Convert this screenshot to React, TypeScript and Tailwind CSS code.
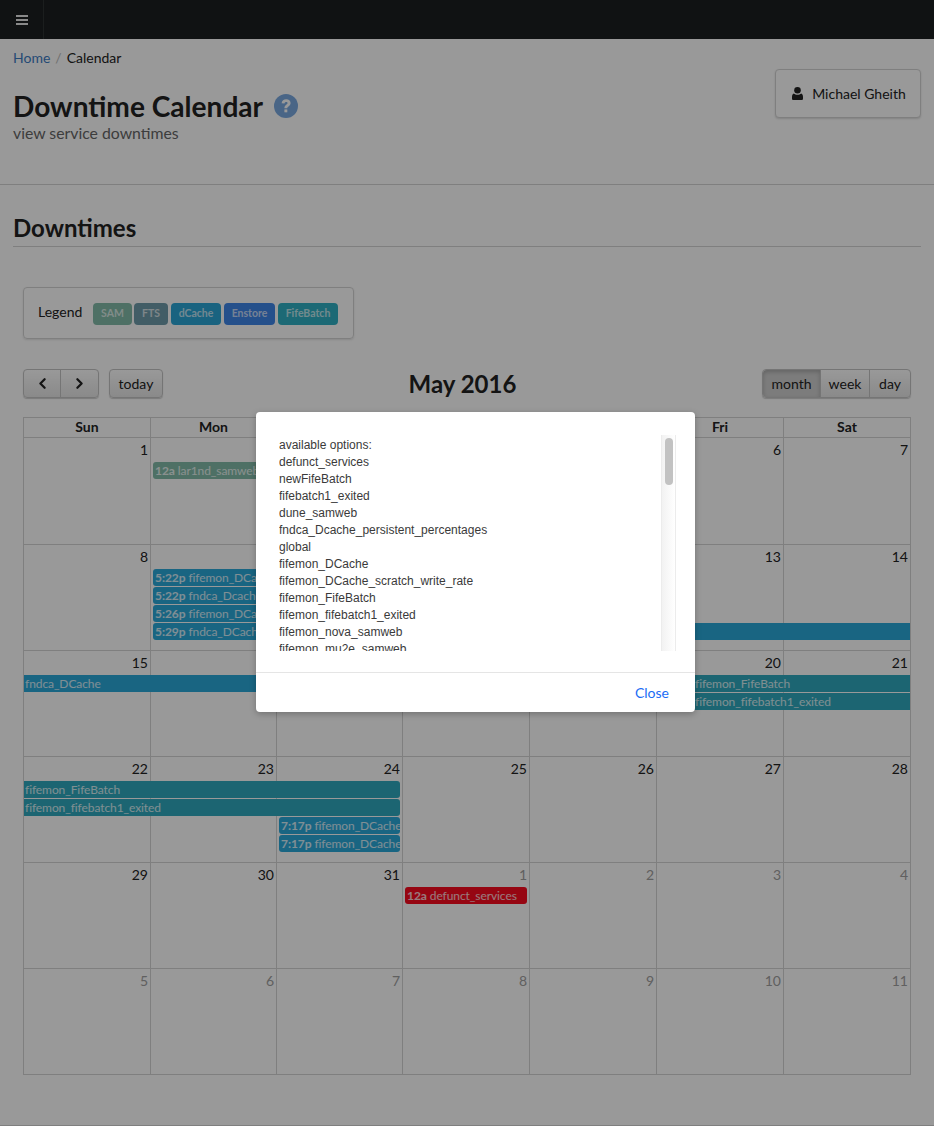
import { ChevronLeft, ChevronRight } from 'lucide-react'

const lato = { fontFamily: 'Lato, sans-serif' }

interface CalEvent {
  start: number
  span: number
  row: number
  time?: string
  title: string
  color: string
  left?: boolean
  right?: boolean
  inset?: string
}

const BLUE = 'bg-[#2ba8d9]'
const FIFE = 'bg-[#2fa9be]'

const weeks: { days: { n: number; muted?: boolean }[]; events: CalEvent[] }[] = [
  {
    days: [1, 2, 3, 4, 5, 6, 7].map((n) => ({ n })),
    events: [{ start: 2, span: 1, row: 2, time: '12a', title: 'lar1nd_samweb', color: 'bg-[#82bba9]', left: true, right: true }],
  },
  {
    days: [8, 9, 10, 11, 12, 13, 14].map((n) => ({ n })),
    events: [
      { start: 2, span: 1, row: 2, time: '5:22p', title: 'fifemon_DCache', color: BLUE, left: true, right: true },
      { start: 2, span: 1, row: 3, time: '5:22p', title: 'fndca_Dcache', color: BLUE, left: true, right: true },
      { start: 2, span: 1, row: 4, time: '5:26p', title: 'fifemon_DCache', color: BLUE, left: true, right: true },
      { start: 2, span: 1, row: 5, time: '5:29p', title: 'fndca_DCache', color: BLUE, left: true, right: true },
      { start: 5, span: 3, row: 5, title: '', color: BLUE, left: true },
    ],
  },
  {
    days: [15, 16, 17, 18, 19, 20, 21].map((n) => ({ n })),
    events: [
      { start: 1, span: 4, row: 2, title: 'fndca_DCache', color: BLUE, right: true },
      { start: 6, span: 2, row: 2, title: 'fifemon_FifeBatch', color: FIFE, inset: 'pl-[38px]' },
      { start: 6, span: 2, row: 3, title: 'fifemon_fifebatch1_exited', color: FIFE, inset: 'pl-[38px]' },
    ],
  },
  {
    days: [22, 23, 24, 25, 26, 27, 28].map((n) => ({ n })),
    events: [
      { start: 1, span: 3, row: 2, title: 'fifemon_FifeBatch', color: FIFE, right: true },
      { start: 1, span: 3, row: 3, title: 'fifemon_fifebatch1_exited', color: FIFE, right: true },
      { start: 3, span: 1, row: 4, time: '7:17p', title: 'fifemon_DCache', color: BLUE, left: true, right: true },
      { start: 3, span: 1, row: 5, time: '7:17p', title: 'fifemon_DCache', color: BLUE, left: true, right: true },
    ],
  },
  {
    days: [
      { n: 29 },
      { n: 30 },
      { n: 31 },
      { n: 1, muted: true },
      { n: 2, muted: true },
      { n: 3, muted: true },
      { n: 4, muted: true },
    ],
    events: [{ start: 4, span: 1, row: 2, time: '12a', title: 'defunct_services', color: 'bg-[#fb0a1e]', left: true, right: true }],
  },
  {
    days: [5, 6, 7, 8, 9, 10, 11].map((n) => ({ n, muted: true })),
    events: [],
  },
]

const colStart = ['col-start-1', 'col-start-2', 'col-start-3', 'col-start-4', 'col-start-5', 'col-start-6', 'col-start-7']
const colSpan = ['col-span-1', 'col-span-2', 'col-span-3', 'col-span-4']
const rowStart = ['row-start-1', 'row-start-2', 'row-start-3', 'row-start-4', 'row-start-5']

const options = [
  'available options:',
  'defunct_services',
  'newFifeBatch',
  'fifebatch1_exited',
  'dune_samweb',
  'fndca_Dcache_persistent_percentages',
  'global',
  'fifemon_DCache',
  'fifemon_DCache_scratch_write_rate',
  'fifemon_FifeBatch',
  'fifemon_fifebatch1_exited',
  'fifemon_nova_samweb',
  'fifemon_mu2e_samweb',
  'fifemon_uboone_samweb',
]

function Badge({ label, color, width }: { label: string; color: string; width: string }) {
  return (
    <span className={`${color} ${width} h-[22px] rounded-[4px] flex items-center justify-center text-[10.5px] font-bold text-white/70`}>
      {label}
    </span>
  )
}

export default function App() {
  return (
    <div className="relative h-[1126px] overflow-hidden bg-white text-[#222] flex flex-col" style={lato}>
      {/* Navbar */}
      <header className="h-[39px] bg-[#1c1f20] flex shrink-0">
        <div className="w-[44px] border-r border-[#2e3233] flex items-center justify-center">
          <svg width="12" height="10" viewBox="0 0 12 10" className="text-[#e4e4e4]" fill="currentColor">
            <rect width="12" height="2" y="0" />
            <rect width="12" height="2" y="4" />
            <rect width="12" height="2" y="8" />
          </svg>
        </div>
      </header>

      {/* Page header */}
      <div className="h-[146px] px-[13px] border-b border-[#d4d4d4] shrink-0 flex justify-between">
        <div>
          <div className="pt-[10px] text-[14px] leading-[18px] flex gap-[5px]">
            <span className="text-[#3d7cc4]">Home</span>
            <span className="text-[#bbb]">/</span>
            <span>Calendar</span>
          </div>
          <div className="mt-[21px] flex items-center gap-[11px]">
            <h1 className="text-[28.1px] leading-[36px] font-bold">Downtime Calendar</h1>
            <svg width="24" height="24" viewBox="0 0 24 24">
              <circle cx="12" cy="12" r="12" fill="#7ba9e0" />
              <path d="M7.6 9.2C7.9 6.7 9.7 5.2 12.2 5.2c2.6 0 4.4 1.6 4.4 3.8 0 1.6-.9 2.6-2.1 3.4-.9.6-1.2 1-1.2 1.9h-2.9c0-1.8.6-2.8 1.8-3.6.9-.6 1.4-1 1.4-1.6 0-.7-.6-1.2-1.4-1.2-.9 0-1.5.5-1.7 1.5z" fill="#fff" />
              <rect x="10.4" y="15.4" width="2.9" height="2.9" fill="#fff" />
            </svg>
          </div>
          <p className="text-[15.8px] leading-[20px] text-[#666] -mt-[1px]">view service downtimes</p>
        </div>
        <div className="mt-[30px] w-[146px] h-[49px] pl-[2px] border border-[#d4d4d4] rounded-[4px] bg-white shadow-[0_1px_2px_rgba(0,0,0,0.15)] flex items-center justify-center gap-[9px] text-[14px]">
          <svg width="11" height="13" viewBox="0 0 11 13" fill="currentColor">
            <circle cx="5.5" cy="3.3" r="3.3" />
            <path d="M1.8 6.4C0.6 6.9 0 8 0 10v1.4c0 .9.6 1.6 1.5 1.6h8c.9 0 1.5-.7 1.5-1.6V10c0-2-.6-3.1-1.8-3.6-1 .9-2.2 1.3-3.7 1.3s-2.7-.4-3.7-1.3z" />
          </svg>
          Michael Gheith
        </div>
      </div>

      <main className="px-[13px] flex-1">
        <h2 className="mt-[27px] pb-[3px] border-b border-[#d4d4d4] text-[24px] leading-[31px] font-bold">Downtimes</h2>

        <div className="mx-[10px]">
          {/* Legend */}
          <div className="mt-[40px] w-[331px] h-[52px] border border-[#d4d4d4] rounded-[4px] shadow-[0_1px_2px_rgba(0,0,0,0.12)] flex items-center pl-[14px]">
            <span className="text-[14px] w-[55px] -mt-[4px]">Legend</span>
            <div className="flex gap-[3px] mt-[1px]">
              <Badge label="SAM" color="bg-[#82bba9]" width="w-[39px] -mr-px" />
              <Badge label="FTS" color="bg-[#6f9cab]" width="w-[34px]" />
              <Badge label="dCache" color="bg-[#2ba6d6]" width="w-[50px]" />
              <Badge label="Enstore" color="bg-[#3f85e8]" width="w-[51px]" />
              <Badge label="FifeBatch" color="bg-[#30b0c4]" width="w-[60px]" />
            </div>
          </div>

          {/* Toolbar */}
          <div className="mt-[30px] h-[29px] flex items-center justify-between">
            <div className="flex gap-[10px]">
              <div className="flex h-[29px] rounded-[4px] border border-[#c4c4c4] bg-gradient-to-b from-white to-[#e6e6e6] shadow-[0_1px_1px_rgba(0,0,0,0.2)]">
                <span className="w-[37px] border-r border-[#c4c4c4] flex items-center justify-center">
                  <ChevronLeft size={17} strokeWidth={3.2} />
                </span>
                <span className="w-[37px] flex items-center justify-center">
                  <ChevronRight size={17} strokeWidth={3.2} />
                </span>
              </div>
              <span className="w-[54px] h-[29px] rounded-[4px] border border-[#c4c4c4] bg-gradient-to-b from-white to-[#e6e6e6] shadow-[0_1px_1px_rgba(0,0,0,0.2)] flex items-center justify-center text-[14px]">
                today
              </span>
            </div>
            <h2 className="text-[24px] leading-[29px] font-bold">May 2016</h2>
            <div className="flex h-[29px] rounded-[4px] border border-[#c4c4c4] bg-gradient-to-b from-white to-[#e6e6e6] shadow-[0_1px_1px_rgba(0,0,0,0.2)] text-[14px]">
              <span className="w-[57px] bg-[#cfcfcf] rounded-l-[4px] shadow-[inset_0_2px_4px_rgba(0,0,0,0.2)] flex items-center justify-center">month</span>
              <span className="w-[50px] border-x border-[#c4c4c4] flex items-center justify-center">week</span>
              <span className="w-[40px] flex items-center justify-center">day</span>
            </div>
          </div>

          {/* Calendar */}
          <div className="mt-[19px] border-l border-t border-[#d4d4d4] text-[14px]">
            <div className="grid grid-cols-[127px_126px_126px_127px_127px_127px_127px] h-[20px] border-b border-[#d4d4d4]">
              {['Sun', 'Mon', 'Tue', 'Wed', 'Thu', 'Fri', 'Sat'].map((d) => (
                <div key={d} className="border-r border-[#d4d4d4] text-center font-bold leading-[18px]">{d}</div>
              ))}
            </div>
            {weeks.map((week, i) => (
              <div
                key={i}
                className={`grid grid-cols-[127px_126px_126px_127px_127px_127px_127px] grid-rows-[24px_18px_18px_18px_1fr] border-b border-[#d4d4d4] ${i === 0 ? 'h-[107px]' : 'h-[106px]'}`}
              >
                {week.days.map((d, j) => (
                  <div
                    key={j}
                    className={`${colStart[j]} row-start-1 row-span-5 border-r border-[#d4d4d4] text-right pr-[2px] leading-[23px] ${d.muted ? 'text-[#a0a0a0]' : ''}`}
                  >
                    {d.n}
                  </div>
                ))}
                {week.events.map((ev, k) => (
                  <div
                    key={k}
                    className={`${colStart[ev.start - 1]} ${colSpan[ev.span - 1]} ${rowStart[ev.row - 1]} z-10 h-[17px] overflow-hidden whitespace-nowrap text-[12px] leading-[17px] tracking-[-0.08px] text-white/80 ${ev.color} ${ev.inset ?? (ev.left ? 'pl-[2px]' : 'pl-[1px]')} ${ev.left ? 'ml-[2px] rounded-l-[3px]' : ''} ${ev.right ? 'mr-[3px] rounded-r-[3px]' : 'mr-[1px]'}`}
                  >
                    {ev.time && <b className="mr-[3px]">{ev.time}</b>}
                    {ev.title}
                  </div>
                ))}
              </div>
            ))}
          </div>
        </div>
      </main>

      <div className="h-px bg-[#d4d4d4] shrink-0" />

      {/* Modal backdrop */}
      <div className="absolute inset-0 z-20 bg-black/40 flex justify-center">
        <div className="mt-[412px] ml-[17px] w-[439px] h-[300px] bg-white rounded-[4px] shadow-[0_2px_6px_rgba(0,0,0,0.25)] flex flex-col self-start">
          <div className="flex h-[260px] pt-[23px] pl-[23px] pr-[19px] pb-[21px]">
            <div className="flex-1 overflow-hidden pt-[2px] text-[12px] leading-[17px] text-[#3a3a3a]" style={{ fontFamily: '"Liberation Sans", Arial, sans-serif' }}>
              {options.map((o) => (
                <div key={o}>{o}</div>
              ))}
            </div>
            <div className="w-[15px] h-full border-x border-[#ececec] bg-gradient-to-r from-[#f2f2f2] to-white px-[3px] pt-[3px]">
              <div className="h-[47px] w-[8px] rounded-full bg-[#c2c2c2]" />
            </div>
          </div>
          <div className="flex-1 border-t border-[#e5e5e5] flex items-center justify-end pr-[26px] text-[14px] text-[#1a6cf5]">
            Close
          </div>
        </div>
      </div>
    </div>
  )
}
